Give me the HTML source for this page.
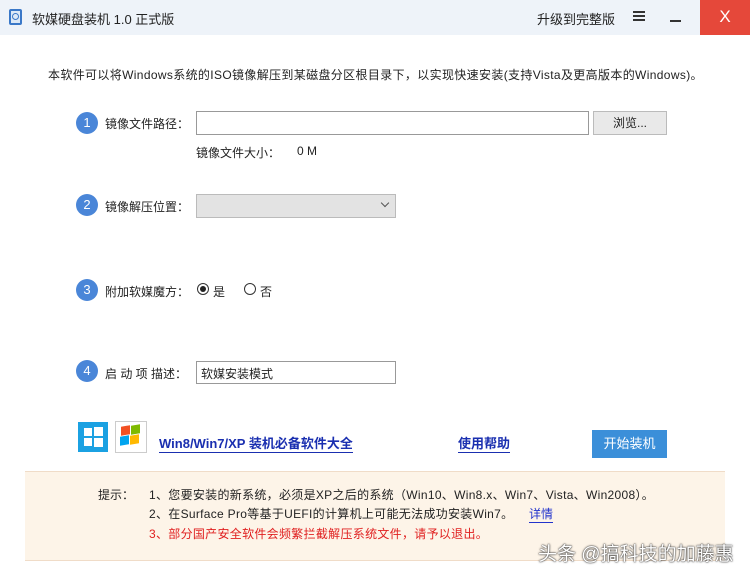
<!DOCTYPE html>
<html><head><meta charset="utf-8"><style>
*{margin:0;padding:0;box-sizing:border-box}
body{width:750px;height:579px;background:#fff;font-family:"Liberation Sans","Noto Sans CJK SC",sans-serif;font-size:12px;color:#222;position:relative;overflow:hidden}
.a{position:absolute;white-space:nowrap}
.tb{left:0;top:0;width:750px;height:35px;background:#eef3f9}
.circ{width:22px;height:22px;border-radius:50%;background:#4a86d8;color:#fff;text-align:center;line-height:22px;font-size:13px}
.inp{border:1px solid #999;background:#fff}
</style></head><body>
<div class="a tb"></div>
<div class="a" style="left:9px;top:9px;width:13px;height:16px;border:2px solid #3a78c8;border-radius:2px;background:#dce9f7"></div>
<div class="a" style="left:12px;top:13px;width:7px;height:7px;border:1.5px solid #3a78c8;border-radius:50%"></div>
<div class="a" style="left:32px;top:9px;font-size:13px">软媒硬盘装机 1.0 正式版</div>
<div class="a" style="left:537px;top:9px;font-size:13px">升级到完整版</div>
<div class="a" style="left:633px;top:11px;width:12px;height:10px;border-top:2px solid #333;border-bottom:2px solid #333"></div>
<div class="a" style="left:633px;top:15px;width:12px;height:2px;background:#333"></div>
<div class="a" style="left:670px;top:20px;width:11px;height:2px;background:#333"></div>
<div class="a" style="left:700px;top:0;width:50px;height:35px;background:#e5483a;color:#fff;text-align:center;line-height:33px;font-size:17px">X</div>
<div class="a" style="left:48px;top:66px;letter-spacing:0.35px">本软件可以将Windows系统的ISO镜像解压到某磁盘分区根目录下，以实现快速安装(支持Vista及更高版本的Windows)。</div>

<div class="a circ" style="left:76px;top:112px">1</div>
<div class="a" style="left:105px;top:115px">镜像文件路径：</div>
<div class="a inp" style="left:196px;top:111px;width:393px;height:24px"></div>
<div class="a" style="left:593px;top:111px;width:74px;height:24px;border:1px solid #bbb;background:#e9e9e9;text-align:center;line-height:22px">浏览...</div>
<div class="a" style="left:196px;top:144px">镜像文件大小：</div>
<div class="a" style="left:297px;top:144px">0 M</div>

<div class="a circ" style="left:76px;top:194px">2</div>
<div class="a" style="left:105px;top:198px">镜像解压位置：</div>
<div class="a" style="left:196px;top:194px;width:200px;height:24px;border:1px solid #bbb;background:#e3e3e3"></div>
<div class="a" style="left:382px;top:200px;width:6px;height:6px;border-right:1px solid #555;border-bottom:1px solid #555;transform:rotate(45deg)"></div>

<div class="a circ" style="left:76px;top:279px">3</div>
<div class="a" style="left:105px;top:283px">附加软媒魔方：</div>
<div class="a" style="left:197px;top:283px;width:12px;height:12px;border:1px solid #333;border-radius:50%"></div>
<div class="a" style="left:200px;top:286px;width:6px;height:6px;background:#222;border-radius:50%"></div>
<div class="a" style="left:213px;top:283px">是</div>
<div class="a" style="left:244px;top:283px;width:12px;height:12px;border:1px solid #333;border-radius:50%"></div>
<div class="a" style="left:260px;top:283px">否</div>

<div class="a circ" style="left:76px;top:360px">4</div>
<div class="a" style="left:105px;top:365px">启 动 项 描述：</div>
<div class="a inp" style="left:196px;top:361px;width:200px;height:23px;padding:3px 4px">软媒安装模式</div>

<div class="a" style="left:78px;top:422px;width:30px;height:30px;background:#1ba1e2"></div>
<div class="a" style="left:84px;top:428px;width:8px;height:8px;background:#fff"></div>
<div class="a" style="left:94px;top:427px;width:9px;height:9px;background:#fff"></div>
<div class="a" style="left:84px;top:438px;width:8px;height:8px;background:#fff"></div>
<div class="a" style="left:94px;top:438px;width:9px;height:9px;background:#fff"></div>
<div class="a" style="left:115px;top:421px;width:32px;height:32px;border:1px solid #ccc;background:#fff"></div>
<div class="a" style="left:121px;top:426px;width:9px;height:9px;background:#f25022;transform:skewY(-10deg)"></div>
<div class="a" style="left:131px;top:425px;width:9px;height:9px;background:#7fba00;transform:skewY(-10deg)"></div>
<div class="a" style="left:120px;top:436px;width:9px;height:9px;background:#00a4ef;transform:skewY(-10deg)"></div>
<div class="a" style="left:130px;top:435px;width:9px;height:9px;background:#ffb900;transform:skewY(-10deg)"></div>
<div class="a" style="left:159px;top:433px;color:#1a2fb0;font-weight:bold;font-size:13px;border-bottom:1px solid #1a2fb0">Win8/Win7/XP 装机必备软件大全</div>
<div class="a" style="left:458px;top:433px;color:#1a2fb0;font-weight:bold;font-size:13px;border-bottom:1px solid #1a2fb0">使用帮助</div>
<div class="a" style="left:592px;top:430px;width:75px;height:28px;background:#3b8fd9;color:#fff;text-align:center;line-height:28px;font-size:13px">开始装机</div>

<div class="a" style="left:25px;top:471px;width:700px;height:90px;background:#fdf4e8;border-top:1px solid #f0dcc8;border-bottom:1px solid #f0dcc8"></div>
<div class="a" style="left:98px;top:486px">提示：</div>
<div class="a" style="left:149px;top:486px;letter-spacing:0.3px">1、您要安装的新系统，必须是XP之后的系统（Win10、Win8.x、Win7、Vista、Win2008）。</div>
<div class="a" style="left:149px;top:505px;letter-spacing:0.3px">2、在Surface Pro等基于UEFI的计算机上可能无法成功安装Win7。</div>
<div class="a" style="left:529px;top:505px;color:#2233cc;border-bottom:1px solid #2233cc">详情</div>
<div class="a" style="left:149px;top:525px;color:#e02020;letter-spacing:0.3px">3、部分国产安全软件会频繁拦截解压系统文件，请予以退出。</div>
<div class="a" style="left:538px;top:539px;font-size:19px;color:#fff;text-shadow:0 0 2px #333,0 0 1px #000">头条 @搞科技的加藤惠</div>
</body></html>
